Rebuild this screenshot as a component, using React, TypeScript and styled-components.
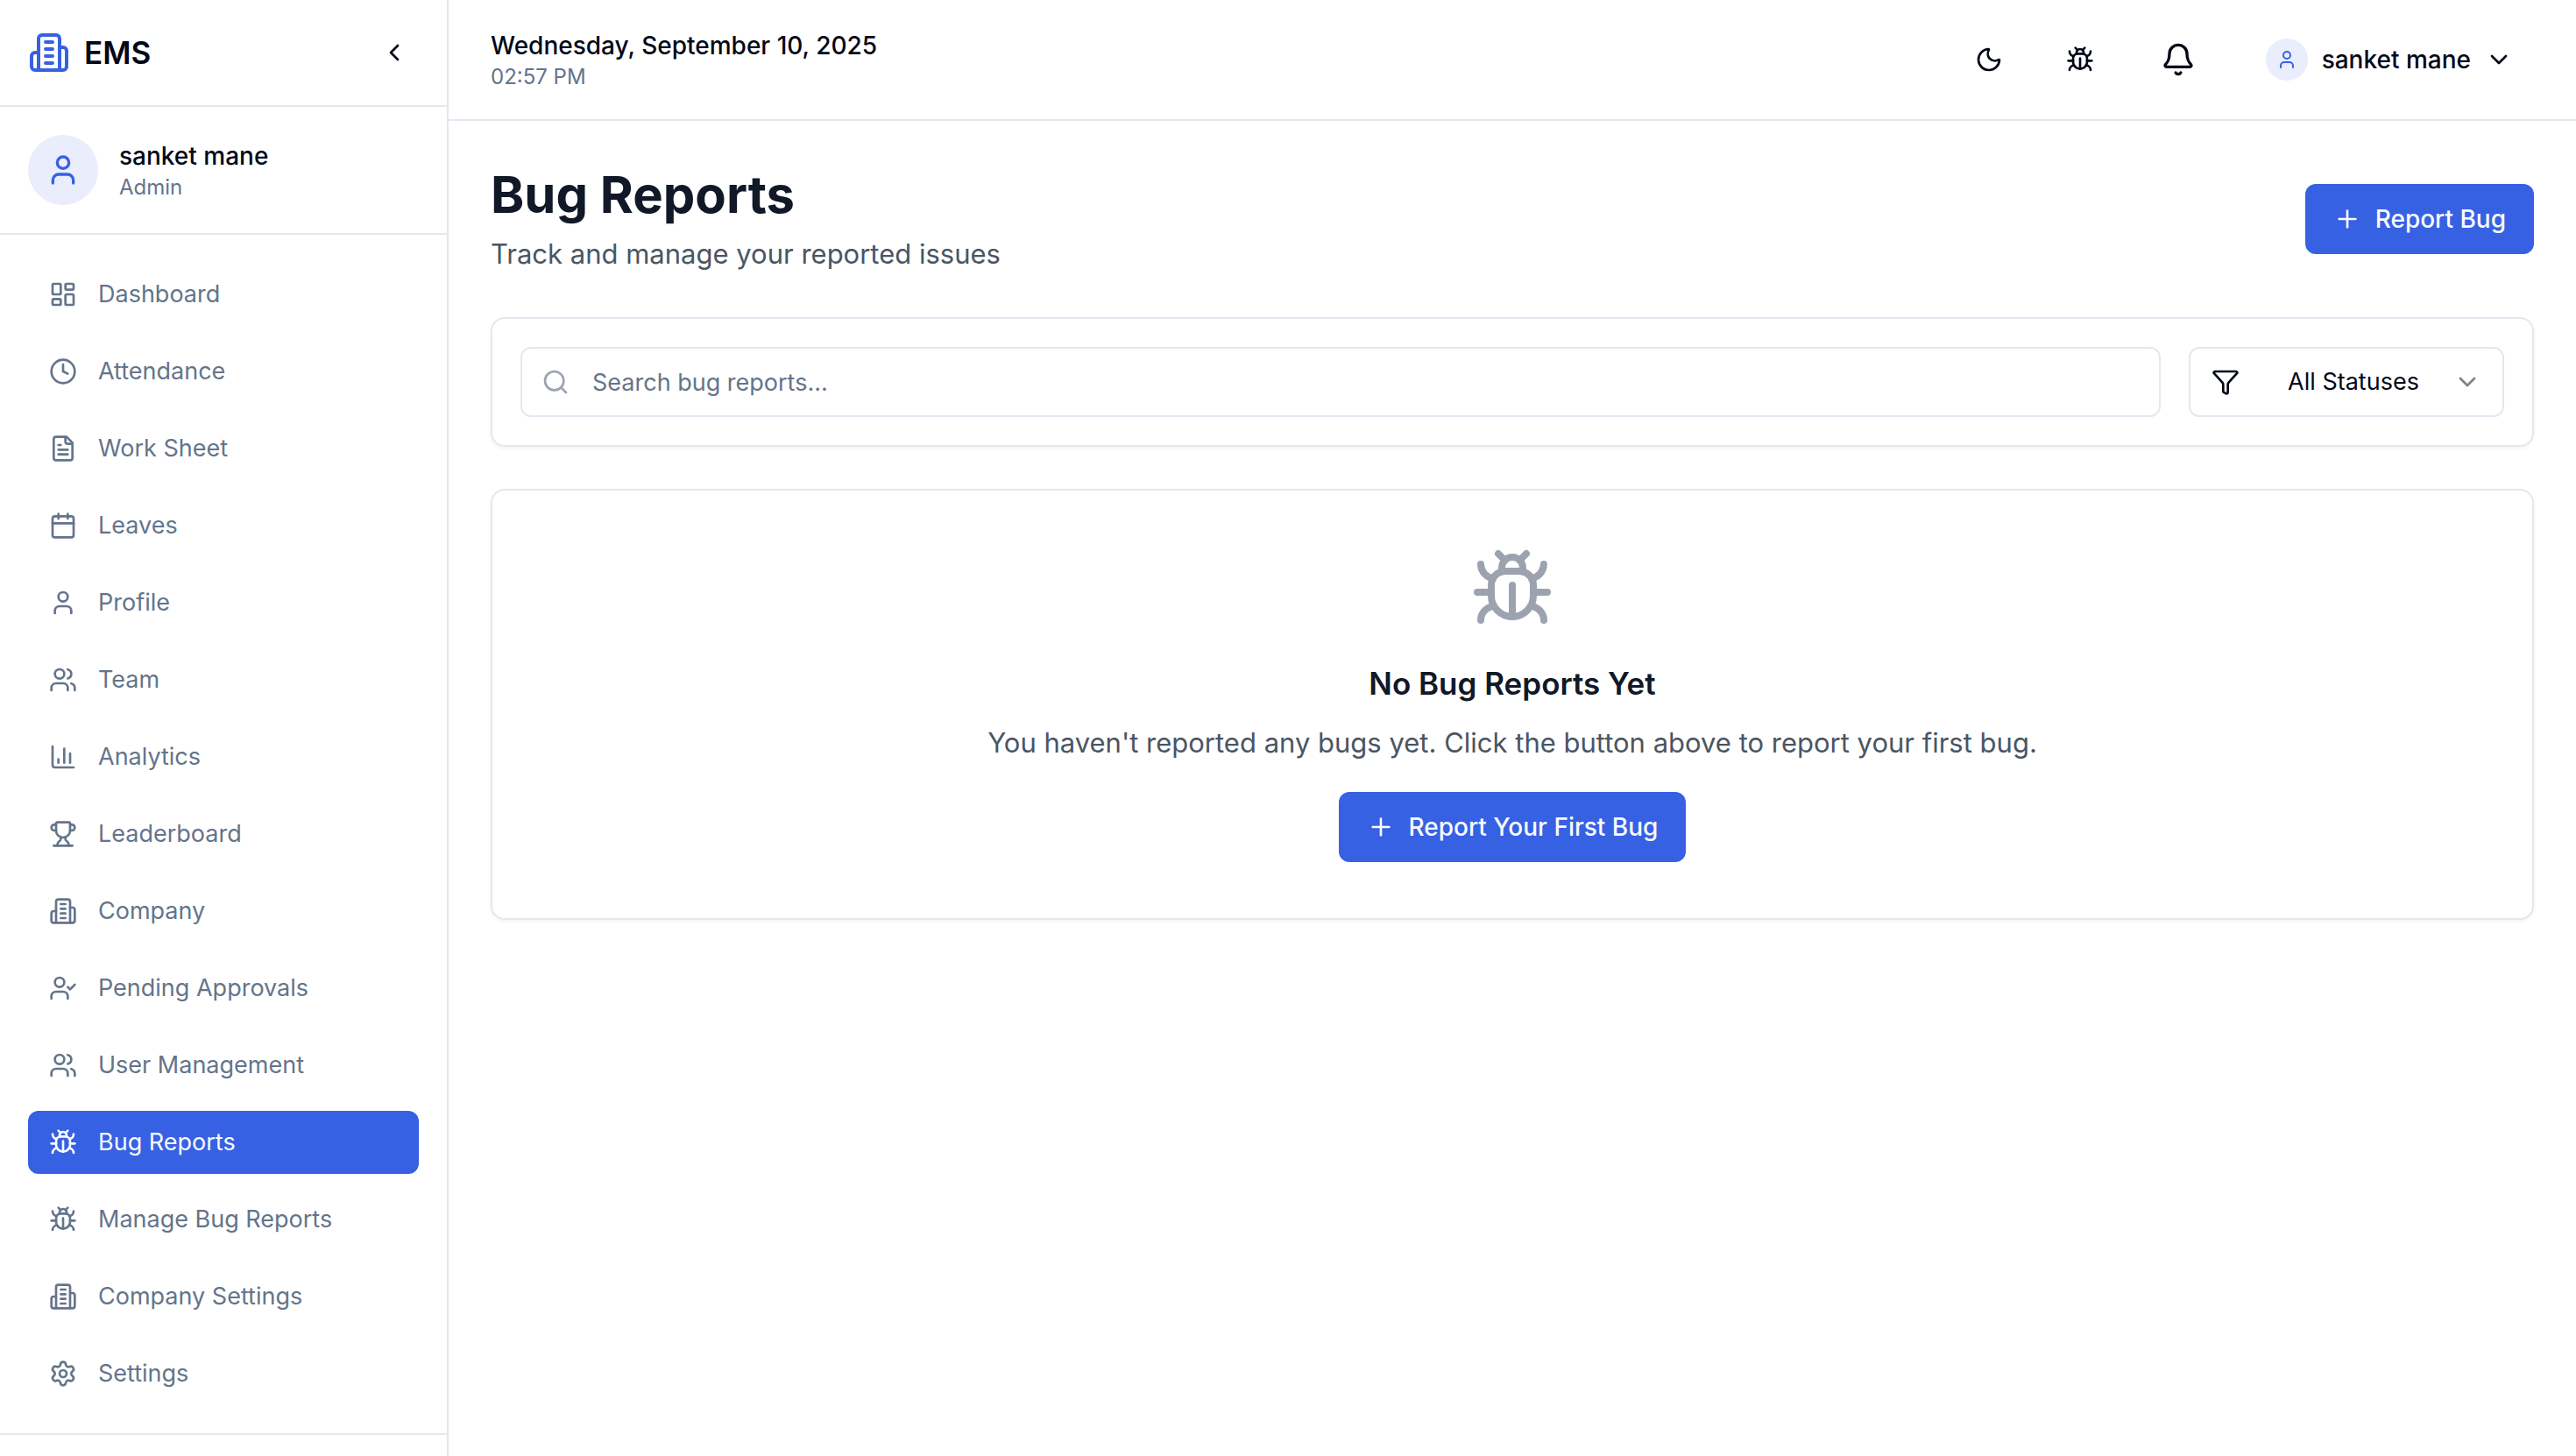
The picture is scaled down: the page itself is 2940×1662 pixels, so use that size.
import React from "react";
import styled, { createGlobalStyle, css } from "styled-components";
import {
  LayoutDashboard,
  Calendar,
  User,
  ChartColumn,
  Trophy,
  Settings,
  ChevronLeft,
  ChevronDown,
  Moon,
  Bell,
  Plus,
  Funnel,
} from "lucide-react";

const color = {
  text: "#020817",
  heading: "#111827",
  body: "#4b5563",
  muted: "#64748b",
  faint: "#9ca3af",
  border: "#e2e8f0",
  primary: "#3761e3",
  primaryText: "#f8fafc",
  tint: "#e9edfc",
  surface: "#ffffff",
};

const GlobalStyle = createGlobalStyle`
  *, *::before, *::after { box-sizing: border-box; }
  body {
    margin: 0;
    background: ${color.surface};
    color: ${color.text};
    font-family: Inter, "Liberation Sans", sans-serif;
    font-size: 28px;
    line-height: 40px;
  }
  h1, h2, p, ul { margin: 0; padding: 0; }
  button, input, select { font: inherit; color: inherit; margin: 0; }
  svg { display: block; flex-shrink: 0; }
`;

type IconProps = { size?: number };

function Glyph({ size = 32, children }: IconProps & { children: React.ReactNode }) {
  return (
    <svg
      width={size}
      height={size}
      viewBox="0 0 24 24"
      fill="none"
      stroke="currentColor"
      strokeWidth="2"
      strokeLinecap="round"
      strokeLinejoin="round"
      aria-hidden="true"
    >
      {children}
    </svg>
  );
}

const BuildingIcon = ({ size }: IconProps) => (
  <Glyph size={size}>
    <path d="M6 22V4a2 2 0 0 1 2-2h8a2 2 0 0 1 2 2v18Z" />
    <path d="M6 12H4a2 2 0 0 0-2 2v6a2 2 0 0 0 2 2h2" />
    <path d="M18 9h2a2 2 0 0 1 2 2v9a2 2 0 0 1-2 2h-2" />
    <path d="M10 6h4M10 10h4M10 14h4M10 18h4" />
  </Glyph>
);

const BugIcon = ({ size }: IconProps) => (
  <Glyph size={size}>
    <path d="m8 2 1.88 1.88" />
    <path d="M14.12 3.88 16 2" />
    <path d="M9 7.13v-1a3.003 3.003 0 1 1 6 0v1" />
    <path d="M12 20c-3.3 0-6-2.7-6-6v-3a4 4 0 0 1 4-4h4a4 4 0 0 1 4 4v3c0 3.3-2.7 6-6 6" />
    <path d="M12 20v-9" />
    <path d="M6.53 9C4.6 8.8 3 7.1 3 5" />
    <path d="M6 13H2" />
    <path d="M3 21c0-2.1 1.7-3.9 3.8-4" />
    <path d="M20.97 5c0 2.1-1.6 3.8-3.5 4" />
    <path d="M22 13h-4" />
    <path d="M17.2 17c2.1.1 3.8 1.9 3.8 4" />
  </Glyph>
);

const ClockIcon = ({ size }: IconProps) => (
  <Glyph size={size}>
    <circle cx="12" cy="12" r="10" />
    <path d="M12 6v6l4 2" />
  </Glyph>
);

const SheetIcon = ({ size }: IconProps) => (
  <Glyph size={size}>
    <path d="M15 2H6a2 2 0 0 0-2 2v16a2 2 0 0 0 2 2h12a2 2 0 0 0 2-2V7Z" />
    <path d="M14 2v4a2 2 0 0 0 2 2h4" />
    <path d="M10 9H8M16 13H8M16 17H8" />
  </Glyph>
);

const TeamIcon = ({ size }: IconProps) => (
  <Glyph size={size}>
    <path d="M16 21v-2a4 4 0 0 0-4-4H6a4 4 0 0 0-4 4v2" />
    <circle cx="9" cy="7" r="4" />
    <path d="M22 21v-2a4 4 0 0 0-3-3.87" />
    <path d="M16 3.13a4 4 0 0 1 0 7.75" />
  </Glyph>
);

const ApprovalIcon = ({ size }: IconProps) => (
  <Glyph size={size}>
    <path d="M16 21v-2a4 4 0 0 0-4-4H6a4 4 0 0 0-4 4v2" />
    <circle cx="9" cy="7" r="4" />
    <path d="m16 11 2 2 4-4" />
  </Glyph>
);

const SearchIcon = ({ size }: IconProps) => (
  <Glyph size={size}>
    <circle cx="11" cy="11" r="8" />
    <path d="m21 21-4.3-4.3" />
  </Glyph>
);

const Shell = styled.div`
  display: flex;
  min-height: 100vh;
`;

const Sidebar = styled.aside`
  display: flex;
  flex-direction: column;
  flex: none;
  width: 512px;
  border-right: 2px solid ${color.border};
`;

const Brand = styled.div`
  display: flex;
  align-items: center;
  justify-content: space-between;
  padding: 32px;
  border-bottom: 2px solid ${color.border};
`;

const BrandName = styled.a`
  display: flex;
  align-items: center;
  gap: 16px;
  height: 56px;
  color: ${color.primary};
  font-size: 35px;
  font-weight: 600;
  text-decoration: none;

  span {
    color: ${color.text};
  }
`;

const IconButton = styled.button<{ $width: number; $height: number }>`
  display: flex;
  align-items: center;
  justify-content: center;
  width: ${(p) => p.$width}px;
  height: ${(p) => p.$height}px;
  padding: 0;
  border: 0;
  border-radius: 12px;
  background: transparent;
  cursor: pointer;
`;

const Account = styled.div`
  display: flex;
  align-items: center;
  gap: 24px;
  padding: 32px;
  border-bottom: 2px solid ${color.border};
`;

const Avatar = styled.span<{ $size: number }>`
  display: flex;
  align-items: center;
  justify-content: center;
  flex: none;
  width: ${(p) => p.$size}px;
  height: ${(p) => p.$size}px;
  border-radius: 50%;
  background: ${color.tint};
  color: ${color.primary};
`;

const Strong = styled.p`
  font-weight: 500;
`;

const Small = styled.p`
  color: ${color.muted};
  font-size: 24px;
  line-height: 32px;
`;

const Nav = styled.nav`
  padding: 32px;
`;

const NavList = styled.ul`
  display: flex;
  flex-direction: column;
  gap: 16px;
  list-style: none;
`;

const NavLink = styled.a<{ $active: boolean }>`
  display: flex;
  align-items: center;
  gap: 24px;
  padding: 16px 24px;
  border-radius: 12px;
  color: ${color.muted};
  font-size: 27px;
  text-decoration: none;
  white-space: nowrap;

  ${(p) =>
    p.$active &&
    css`
      background: ${color.primary};
      color: ${color.primaryText};
    `}
`;

const SidebarFooter = styled.div`
  flex: 1;
  border-top: 2px solid ${color.border};
`;

const Content = styled.div`
  flex: 1;
  min-width: 0;
`;

const TopBar = styled.header`
  display: flex;
  align-items: center;
  justify-content: space-between;
  padding: 32px 48px;
  border-bottom: 2px solid ${color.border};
`;

const Actions = styled.div`
  display: flex;
  align-items: center;
  gap: 32px;
`;

const UserMenu = styled.button`
  display: flex;
  align-items: center;
  gap: 16px;
  height: 72px;
  padding: 0 24px;
  border: 0;
  border-radius: 12px;
  background: transparent;
  font-weight: 500;
  cursor: pointer;
`;

const Main = styled.main`
  display: flex;
  flex-direction: column;
  gap: 48px;
  padding: 48px;
`;

const PageHead = styled.div`
  display: flex;
  align-items: center;
  justify-content: space-between;
`;

const Title = styled.h1`
  color: ${color.heading};
  font-size: 58px;
  font-weight: 700;
  line-height: 72px;
`;

const Lead = styled.p`
  margin-top: 8px;
  color: ${color.body};
  font-size: 31px;
  line-height: 48px;
`;

const PrimaryButton = styled.button`
  display: flex;
  align-items: center;
  gap: 16px;
  height: 80px;
  padding: 0 32px;
  border: 0;
  border-radius: 12px;
  background: ${color.primary};
  color: ${color.primaryText};
  font-weight: 500;
  white-space: nowrap;
  cursor: pointer;
`;

const Card = styled.section`
  border: 2px solid ${color.border};
  border-radius: 16px;
  background: ${color.surface};
  box-shadow: 0 2px 4px rgba(0, 0, 0, 0.05);
`;

const Filters = styled(Card)`
  display: flex;
  gap: 32px;
  padding: 32px;
`;

const Field = styled.label`
  display: flex;
  align-items: center;
  height: 80px;
  padding: 0 24px;
  border: 2px solid ${color.border};
  border-radius: 12px;
`;

const SearchField = styled(Field)`
  flex: 1;
  gap: 26px;
  padding: 0 22px;
  color: ${color.faint};
`;

const SearchInput = styled.input`
  flex: 1;
  min-width: 0;
  height: 100%;
  padding: 0;
  border: 0;
  outline: 0;
  background: transparent;
  color: ${color.text};
  font-size: 27px;

  &::placeholder {
    color: ${color.muted};
    opacity: 1;
  }
`;

const StatusField = styled(Field)`
  width: 360px;

  svg:last-child {
    opacity: 0.5;
  }
`;

const StatusSelect = styled.select`
  appearance: none;
  flex: 1;
  min-width: 0;
  height: 100%;
  padding: 0 0 0 16px;
  border: 0;
  outline: 0;
  background: transparent;
  font-size: 27px;
  text-align: center;
  text-align-last: center;
`;

const EmptyState = styled(Card)`
  display: flex;
  flex-direction: column;
  align-items: center;
  padding: 64px;
  color: ${color.faint};
  text-align: center;
`;

const EmptyTitle = styled.h2`
  margin-top: 32px;
  color: ${color.heading};
  font-size: 35px;
  font-weight: 600;
  line-height: 56px;
`;

const EmptyText = styled.p`
  margin: 16px 0 32px;
  color: ${color.body};
  font-size: 31px;
  line-height: 48px;
`;

const navItems: { label: string; icon: React.ElementType }[] = [
  { label: "Dashboard", icon: LayoutDashboard },
  { label: "Attendance", icon: ClockIcon },
  { label: "Work Sheet", icon: SheetIcon },
  { label: "Leaves", icon: Calendar },
  { label: "Profile", icon: User },
  { label: "Team", icon: TeamIcon },
  { label: "Analytics", icon: ChartColumn },
  { label: "Leaderboard", icon: Trophy },
  { label: "Company", icon: BuildingIcon },
  { label: "Pending Approvals", icon: ApprovalIcon },
  { label: "User Management", icon: TeamIcon },
  { label: "Bug Reports", icon: BugIcon },
  { label: "Manage Bug Reports", icon: BugIcon },
  { label: "Company Settings", icon: BuildingIcon },
  { label: "Settings", icon: Settings },
];

export default function App() {
  const current = "Bug Reports";

  return (
    <>
      <GlobalStyle />
      <Shell>
        <Sidebar>
          <Brand>
            <BrandName href="#">
              <BuildingIcon size={48} />
              <span>EMS</span>
            </BrandName>
            <IconButton type="button" aria-label="Collapse sidebar" $width={56} $height={56}>
              <ChevronLeft size={32} />
            </IconButton>
          </Brand>
          <Account>
            <Avatar $size={80}>
              <User size={40} />
            </Avatar>
            <div>
              <Strong>sanket mane</Strong>
              <Small>Admin</Small>
            </div>
          </Account>
          <Nav aria-label="Main">
            <NavList>
              {navItems.map(({ label, icon: Icon }) => (
                <li key={label}>
                  <NavLink
                    href="#"
                    $active={label === current}
                    aria-current={label === current ? "page" : undefined}
                  >
                    <Icon size={32} />
                    {label}
                  </NavLink>
                </li>
              ))}
            </NavList>
          </Nav>
          <SidebarFooter />
        </Sidebar>

        <Content>
          <TopBar>
            <div>
              <Strong>Wednesday, September 10, 2025</Strong>
              <Small>02:57 PM</Small>
            </div>
            <Actions>
              <IconButton type="button" aria-label="Toggle theme" $width={72} $height={72}>
                <Moon size={32} />
              </IconButton>
              <IconButton type="button" aria-label="Report a bug" $width={72} $height={72}>
                <BugIcon size={32} />
              </IconButton>
              <IconButton type="button" aria-label="Notifications" $width={88} $height={72}>
                <Bell size={40} />
              </IconButton>
              <UserMenu type="button">
                <Avatar $size={48}>
                  <User size={24} />
                </Avatar>
                sanket mane
                <ChevronDown size={32} />
              </UserMenu>
            </Actions>
          </TopBar>

          <Main>
            <PageHead>
              <div>
                <Title>Bug Reports</Title>
                <Lead>Track and manage your reported issues</Lead>
              </div>
              <PrimaryButton type="button">
                <Plus size={32} />
                Report Bug
              </PrimaryButton>
            </PageHead>

            <Filters aria-label="Filters">
              <SearchField>
                <SearchIcon size={32} />
                <SearchInput
                  type="text"
                  aria-label="Search bug reports"
                  placeholder="Search bug reports..."
                />
              </SearchField>
              <StatusField>
                <Funnel size={32} />
                <StatusSelect aria-label="Status" defaultValue="all">
                  <option value="all">All Statuses</option>
                  <option value="open">Open</option>
                  <option value="resolved">Resolved</option>
                </StatusSelect>
                <ChevronDown size={32} />
              </StatusField>
            </Filters>

            <EmptyState>
              <BugIcon size={96} />
              <EmptyTitle>No Bug Reports Yet</EmptyTitle>
              <EmptyText>
                You haven't reported any bugs yet. Click the button above to report your first bug.
              </EmptyText>
              <PrimaryButton type="button">
                <Plus size={32} />
                Report Your First Bug
              </PrimaryButton>
            </EmptyState>
          </Main>
        </Content>
      </Shell>
    </>
  );
}
